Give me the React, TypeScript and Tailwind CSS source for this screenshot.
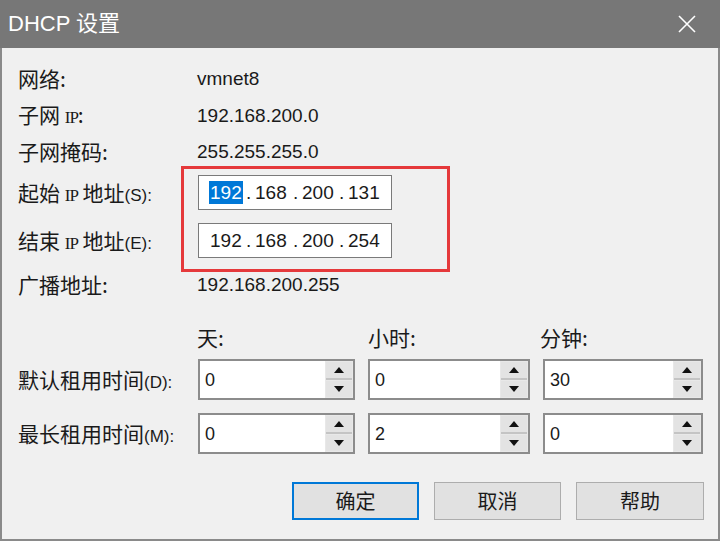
import React from "react";

const LABEL = "font-['Noto_Sans_CJK_SC',sans-serif] text-[21px] text-[#1a1a1a] leading-none";
const VALUE = "font-['Liberation_Sans','Noto_Sans_CJK_SC',sans-serif] text-[19px] text-[#1a1a1a] leading-none";

function Up() {
  return (
    <svg width="10" height="6" viewBox="0 0 10 6">
      <polygon points="5,0 10,6 0,6" fill="#111" />
    </svg>
  );
}

function Down() {
  return (
    <svg width="10" height="6" viewBox="0 0 10 6">
      <polygon points="0,0 10,0 5,6" fill="#111" />
    </svg>
  );
}

function Spin({ value, width }: { value: string; width: string }) {
  return (
    <div className={`${width} h-[41px] flex border-2 border-[#8c8c8c] bg-white`}>
      <div className="flex-1 pl-[5px] pt-[7px]">
        <span className="font-['Liberation_Sans',sans-serif] text-[18px] leading-none text-[#1a1a1a]">{value}</span>
      </div>
      <div className="w-[28px] flex flex-col bg-[#e8e8e8] p-[1px] gap-[1px]">
        <div className="flex-1 flex items-center justify-center bg-[#e3e3e3] border-b-2 border-[#c4c4c4]">
          <Up />
        </div>
        <div className="flex-1 flex items-center justify-center bg-[#e3e3e3]">
          <Down />
        </div>
      </div>
    </div>
  );
}

function IpBox({ parts, selected }: { parts: string[]; selected?: boolean }) {
  return (
    <div className={`w-[194px] h-[35px] border border-[#7a7a7a] bg-white flex items-center pl-[11px] ${VALUE}`}>
      <span className="w-[36px] shrink-0">
        <span className={selected ? "bg-[#0078d7] text-white px-[1px] -mx-[1px] py-[1px]" : ""}>{parts[0]}</span>
      </span>
      <span className="w-[9px] shrink-0">.</span>
      <span className="w-[38px] shrink-0">{parts[1]}</span>
      <span className="w-[9px] shrink-0">.</span>
      <span className="w-[37px] shrink-0">{parts[2]}</span>
      <span className="w-[9px] shrink-0">.</span>
      <span>{parts[3]}</span>
    </div>
  );
}

function Ip() {
  return <span className="font-['Liberation_Serif',serif] text-[17px] tracking-[-1px]">IP</span>;
}

function Key({ k }: { k: string }) {
  return <span className="font-['Liberation_Sans',sans-serif] text-[17px]">({k}):</span>;
}

export default function App() {
  return (
    <div className="w-[720px] h-[541px] flex flex-col bg-[#f0f0f0] overflow-hidden">
      {/* title bar */}
      <div className="h-[48px] bg-[#777777] flex items-center justify-between pl-[8px] pr-[24px]">
        <span className="font-['Liberation_Sans','Noto_Sans_CJK_SC',sans-serif] text-[22px] text-white leading-none">
          DHCP 设置
        </span>
        <svg width="18" height="18" viewBox="0 0 18 18">
          <path d="M1 1 L17 17 M17 1 L1 17" stroke="#ffffff" strokeWidth="1.6" />
        </svg>
      </div>

      {/* body */}
      <div className="relative flex-1 flex flex-col border-l-2 border-r-2 border-b-2 border-[#8a8a8a] pl-[16px] pr-[14px] pt-[12px]">
        <div className="h-[37px] flex items-center">
          <div className={`w-[179px] ${LABEL}`}>网络:</div>
          <div className={VALUE}>vmnet8</div>
        </div>
        <div className="h-[36px] flex items-center">
          <div className={`w-[179px] ${LABEL}`}>
            子网 <Ip />:
          </div>
          <div className={VALUE}>192.168.200.0</div>
        </div>
        <div className="h-[36px] flex items-center">
          <div className={`w-[179px] ${LABEL}`}>子网掩码:</div>
          <div className={VALUE}>255.255.255.0</div>
        </div>

        <div className="mt-[6px] h-[35px] flex items-center">
          <div className={`w-[180px] ${LABEL}`}>
            起始 <Ip /> 地址<Key k="S" />
          </div>
          <IpBox parts={["192", "168", "200", "131"]} selected />
        </div>
        <div className="mt-[13px] h-[35px] flex items-center">
          <div className={`w-[180px] ${LABEL}`}>
            结束 <Ip /> 地址<Key k="E" />
          </div>
          <IpBox parts={["192", "168", "200", "254"]} />
        </div>

        <div className="mt-[8px] h-[36px] flex items-center">
          <div className={`w-[179px] ${LABEL}`}>广播地址:</div>
          <div className={VALUE}>192.168.200.255</div>
        </div>

        {/* lease headers */}
        <div className="mt-[17px] h-[36px] flex items-center">
          <div className="w-[179px]" />
          <div className={`w-[171px] ${LABEL}`}>天:</div>
          <div className={`w-[172px] ${LABEL}`}>小时:</div>
          <div className={LABEL}>分钟:</div>
        </div>
        <div className="mt-[4px] flex items-center gap-[13px]">
          <div className={`w-[167px] ${LABEL}`}>
            默认租用时间<Key k="D" />
          </div>
          <Spin value="0" width="w-[157px]" />
          <Spin value="0" width="w-[162px]" />
          <Spin value="30" width="w-[160px]" />
        </div>
        <div className="mt-[13px] flex items-center gap-[13px]">
          <div className={`w-[167px] ${LABEL}`}>
            最长租用时间<Key k="M" />
          </div>
          <Spin value="0" width="w-[157px]" />
          <Spin value="2" width="w-[162px]" />
          <Spin value="0" width="w-[160px]" />
        </div>

        {/* buttons */}
        <div className="mt-[28px] flex justify-end gap-[15px]">
          <button className="w-[127px] h-[38px] bg-[#e1e1e1] border-2 border-[#0078d7] font-['Noto_Sans_CJK_SC',sans-serif] text-[20px] text-[#1a1a1a]">
            确定
          </button>
          <button className="w-[127px] h-[38px] bg-[#e1e1e1] border border-[#adadad] font-['Noto_Sans_CJK_SC',sans-serif] text-[20px] text-[#1a1a1a]">
            取消
          </button>
          <button className="w-[128px] h-[38px] bg-[#e1e1e1] border border-[#adadad] font-['Noto_Sans_CJK_SC',sans-serif] text-[20px] text-[#1a1a1a]">
            帮助
          </button>
        </div>

        {/* red annotation frame */}
        <div className="absolute left-[179px] top-[118px] w-[269px] h-[106px] border-[3px] border-[#e5393b] pointer-events-none" />
      </div>
    </div>
  );
}
